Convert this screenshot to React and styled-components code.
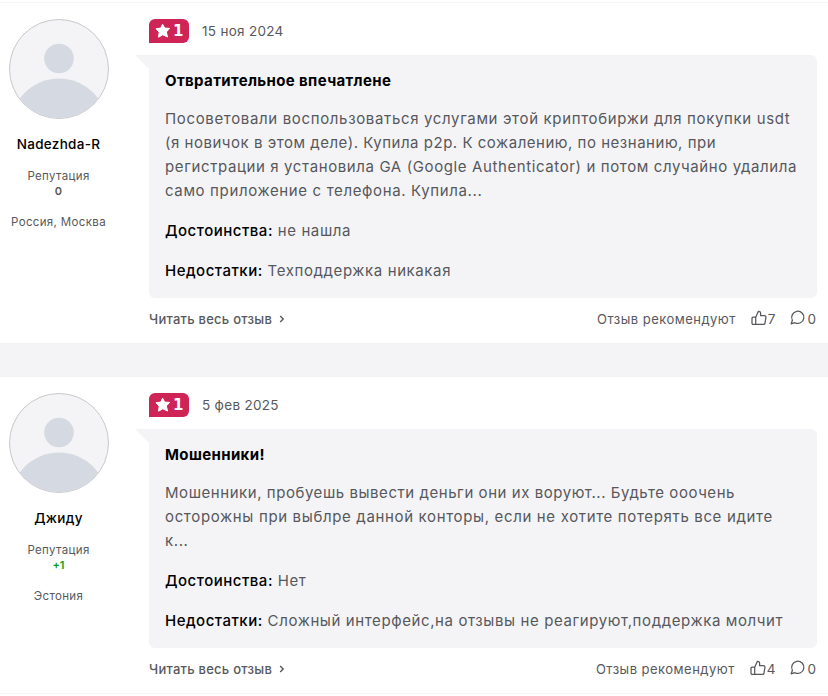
import React from 'react'

import styled, { createGlobalStyle } from 'styled-components'

const reviews = [
  {
    id: 1,
    name: 'Nadezhda-R',
    reputation: '0',
    place: 'Россия, Москва',
    rating: 1,
    date: '15 ноя 2024',
    title: 'Отвратительное впечатлене',
    lines: [
      { text: 'Посоветовали воспользоваться услугами этой криптобиржи для покупки usdt', spacing: 0.65 },
      { text: '(я новичок в этом деле). Купила p2p. К сожалению, по незнанию, при', spacing: 0.52 },
      { text: 'регистрации я установила GA (Google Authenticator) и потом случайно удалила', spacing: 0.61 },
      { text: 'само приложение с телефона. Купила...', spacing: 0.64 }
    ],
    plus: 'не нашла',
    minus: 'Техподдержка никакая',
    likes: 7,
    comments: 0
  },
  {
    id: 2,
    name: 'Джиду',
    reputation: '+1',
    place: 'Эстония',
    rating: 1,
    date: '5 фев 2025',
    title: 'Мошенники!',
    lines: [
      { text: 'Мошенники, пробуешь вывести деньги они их воруют... Будьте ооочень', spacing: 0.55 },
      { text: 'осторожны при выблре данной конторы, если не хотите потерять все идите', spacing: 0.65 },
      { text: 'к...', spacing: 0.6 }
    ],
    plus: 'Нет',
    minus: 'Сложный интерфейс,на отзывы не реагируют,поддержка молчит',
    likes: 4,
    comments: 0
  }
]

const UserPic = () => (
  <Avatar>
    <svg width='98' height='98' viewBox='1 1 98 98'>
      <circle cx='50' cy='39.5' r='14.8' />
      <circle cx='50' cy='108' r='48.5' />
    </svg>
  </Avatar>
)

const StarIcon = () => (
  <svg width='16' height='16' viewBox='0 0 16 16'>
    <path
      d='M7.6 1.2l2 3.9 5 .3-3.3 3.6 1.3 5-4.9-2.2-4.2 2.4.7-5L1 5.8l4.7-.7z'
      fill='#fff' stroke='#fff' strokeWidth='1' strokeLinejoin='round' />
  </svg>
)

const ArrowIcon = () => (
  <svg width='6' height='8' viewBox='0 0 6 8'>
    <path d='M1.2 1l3 3-3 3' fill='none' stroke='currentColor' strokeWidth='1.4' />
  </svg>
)

const LikeIcon = () => (
  <svg width='16' height='16' viewBox='0 0 16 16' fill='none' stroke='currentColor' strokeWidth='1.25' strokeLinejoin='round'>
    <path d='M4.7 14.4H2.2a1.2 1.2 0 0 1-1.2-1.2V8.4a1.2 1.2 0 0 1 1.2-1.2h2.5zM4.7 7.2L7.3 1.4C8.6 1.2 9.6 2 9.6 3.3v2.4h3.9c.9 0 1.5.7 1.4 1.6l-.9 5.8c-.1.8-.7 1.3-1.4 1.3H4.7' />
  </svg>
)

const CommentIcon = () => (
  <svg width='16' height='16' viewBox='0 0 16 16' fill='none' stroke='currentColor' strokeWidth='1.25' strokeLinejoin='round'>
    <path d='M1.2 13.8l1.2-3.6A6.1 6.1 0 1 1 4.9 12.7z' />
  </svg>
)

const Review = ({ review }) => (
  <ReviewBox>
    <Author>
      <UserPic />
      <Name>{review.name}</Name>
      <Small>Репутация</Small>
      <Karma $positive={review.reputation.startsWith('+')}>{review.reputation}</Karma>
      <Small>{review.place}</Small>
    </Author>

    <Content>
      <Head>
        <Rating><StarIcon />{review.rating}</Rating>
        <DateText>{review.date}</DateText>
      </Head>
      <Bubble>
        <Title>{review.title}</Title>
        <div>
          {review.lines.map(line => (
            <Text key={line.text} $spacing={line.spacing}>{line.text}</Text>
          ))}
        </div>
        <Text><Label>Достоинства:</Label> {review.plus}</Text>
        <Text><Label>Недостатки:</Label> {review.minus}</Text>
      </Bubble>
      <Footer>
        <ReadMore>Читать весь отзыв <ArrowIcon /></ReadMore>
        <Actions>
          <Recommend>Отзыв рекомендуют</Recommend>
          <Action><LikeIcon />{review.likes}</Action>
          <Action><CommentIcon />{review.comments}</Action>
        </Actions>
      </Footer>
    </Content>
  </ReviewBox>
)

export default function App () {
  return (
    <>
      <GlobalStyle />
      <List>
        {reviews.map(review => <Review key={review.id} review={review} />)}
      </List>
    </>
  )
}

const GlobalStyle = createGlobalStyle`
  body {
    margin: 0;
    background: #fff;
    color: #57585c;
    font-family: Inter, 'Noto Sans', sans-serif;
  }

  * {
    box-sizing: border-box;
  }

  svg {
    flex: none;
    display: block;
  }
`

const List = styled.div`
  display: flex;
  flex-direction: column;
  gap: 34px;
  margin-top: 2px;
  height: 692px;
  border-top: 1px solid #f4f4f7;
  border-bottom: 1px solid #f4f4f7;
  background: #f4f4f7;
`

const ReviewBox = styled.div`
  display: flex;
  gap: 40px;
  padding: 16px 11px 0 9px;
  background: #fff;
`

const Author = styled.div`
  width: 100px;
  flex: none;
  display: flex;
  flex-direction: column;
  align-items: center;
  white-space: nowrap;
`

const Avatar = styled.div`
  width: 100px;
  height: 100px;
  margin-bottom: 15px;
  border: 1px solid #c9c9cb;
  border-radius: 50%;
  overflow: hidden;
  background: #f4f4f7;

  svg {
    fill: #d5d9e2;
  }
`

const Name = styled.div`
  margin: 0 1px 15px 0;
  font-size: 13.5px;
  font-weight: 500;
  line-height: 20px;
  letter-spacing: 0.3px;
  color: #000;
`

const Small = styled.div`
  margin-right: 1px;
  font-size: 11.5px;
  line-height: 15px;
  letter-spacing: 0.35px;
`

const Karma = styled.div`
  margin: 0 1px 16px 0;
  font-size: 11px;
  font-weight: 600;
  line-height: 15px;
  color: ${props => props.$positive ? '#0b9e1b' : '#57585c'};
`

const Content = styled.div`
  flex: 1;
`

const Head = styled.div`
  display: flex;
  align-items: center;
  gap: 13px;
  height: 24px;
  margin-bottom: 12px;
`

const Rating = styled.div`
  display: flex;
  align-items: center;
  gap: 2px;
  width: 40px;
  height: 24px;
  padding-left: 6px;
  border-radius: 6px 6px 6px 0;
  background: #cf2456;
  color: #fff;
  font-family: 'DejaVu Sans', sans-serif;
  font-size: 15px;
  font-weight: 700;
`

const DateText = styled.div`
  padding-bottom: 1px;
  font-size: 13.5px;
  letter-spacing: 0.3px;
`

const Bubble = styled.div`
  position: relative;
  display: flex;
  flex-direction: column;
  gap: 16px;
  padding: 14px 16px 15px;
  border-radius: 0 6px 6px 6px;
  background: #f4f4f7;

  &:before {
    content: '';
    position: absolute;
    top: 0;
    left: -14px;
    border-top: 14px solid #f4f4f7;
    border-left: 14px solid transparent;
  }
`

const Title = styled.div`
  margin-bottom: -2px;
  font-size: 15px;
  font-weight: 700;
  line-height: 24px;
  letter-spacing: 0.37px;
  color: #000;
`

const Text = styled.div`
  font-size: 15px;
  line-height: 24px;
  letter-spacing: ${props => props.$spacing || 0.6}px;
  white-space: pre;
`

const Label = styled.span`
  font-weight: 500;
  letter-spacing: 0.5px;
  color: #000;
`

const Footer = styled.div`
  display: flex;
  align-items: center;
  justify-content: space-between;
  height: 45px;
  padding: 0 1px 3px 0;
  font-size: 13.5px;
`

const ReadMore = styled.div`
  display: flex;
  align-items: center;
  gap: 7px;
  font-size: 13px;
  font-weight: 500;
  letter-spacing: 0.25px;
`

const Actions = styled.div`
  display: flex;
  align-items: center;
  gap: 15px;
`

const Recommend = styled.div`
  font-size: 13px;
  letter-spacing: 0.48px;
`

const Action = styled.div`
  display: flex;
  align-items: center;
  gap: 1px;

  svg {
    margin-top: -2px;
  }
`
